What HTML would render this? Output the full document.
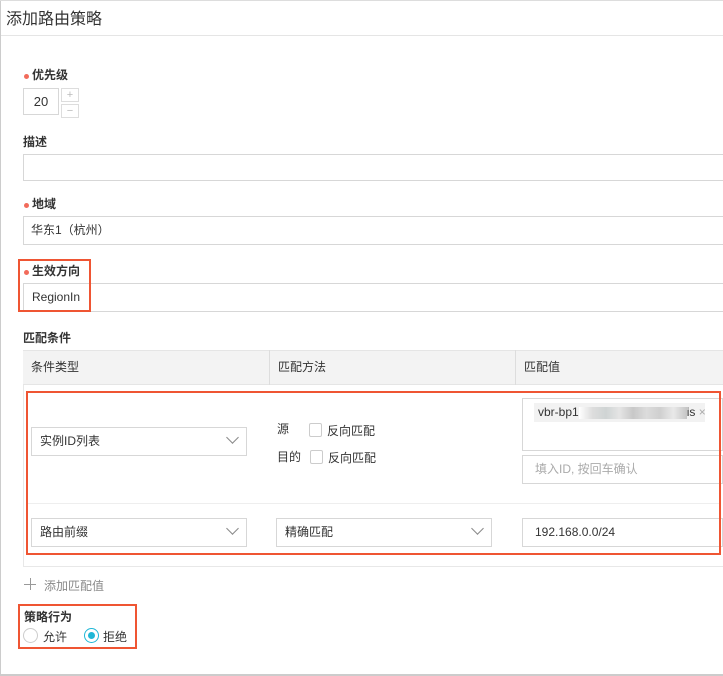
<!DOCTYPE html>
<html><head><meta charset="utf-8"><style>
*{box-sizing:border-box;margin:0;padding:0}
body{width:723px;height:676px;background:#fff;position:relative;overflow:hidden;font-family:"Liberation Sans","Noto Sans CJK SC",sans-serif;font-size:12px;color:#333}
.a{position:absolute}
.lbl{position:absolute;font-weight:bold;font-size:12px;color:#333;line-height:14px}
.dot{position:absolute;width:5px;height:5px;border-radius:50%;background:#f26b5b}
.inp{position:absolute;border:1px solid #d7d7d7;background:#fff;line-height:26px;padding-left:8px;color:#333}
.red{position:absolute;border:2px solid #ef5533}
.chev{position:absolute;width:9px;height:9px;border-right:1px solid #888;border-bottom:1px solid #888;transform:rotate(45deg)}
.cb{position:absolute;width:13px;height:14px;border:1px solid #ccc;border-radius:2px;background:#fff}
</style></head><body>
<div class="a" style="left:0;top:0;width:1px;height:676px;background:#ccc"></div>
<div class="a" style="left:0;top:674px;width:723px;height:2px;background:#ccc"></div>
<div class="a" style="left:0;top:0;width:723px;height:1px;background:#ddd"></div>
<div class="a" style="left:6px;top:5px;font-size:16px;color:#333">添加路由策略</div>
<div class="a" style="left:1px;top:35px;width:722px;height:1px;background:#e5e5e5"></div>

<div class="dot" style="left:24px;top:74px"></div><div class="lbl" style="left:32px;top:68px">优先级</div>
<div class="inp" style="left:23px;top:88px;width:36px;height:27px;text-align:center;padding:0;font-size:13px">20</div>
<div class="a" style="left:61px;top:88px;width:18px;height:14px;border:1px solid #ddd;color:#bbb;text-align:center;line-height:12px;font-size:11px">+</div>
<div class="a" style="left:61px;top:104px;width:18px;height:14px;border:1px solid #ddd;color:#bbb;text-align:center;line-height:12px;font-size:11px">−</div>

<div class="lbl" style="left:23px;top:135px">描述</div>
<div class="inp" style="left:23px;top:154px;width:710px;height:27px"></div>

<div class="dot" style="left:24px;top:203px"></div><div class="lbl" style="left:32px;top:197px">地域</div>
<div class="inp" style="left:23px;top:216px;width:710px;height:29px;padding-left:7px">华东1（杭州）</div>

<div class="dot" style="left:24px;top:270px"></div><div class="lbl" style="left:32px;top:264px">生效方向</div>
<div class="inp" style="left:23px;top:283px;width:710px;height:29px;padding-left:8px">RegionIn</div>
<div class="red" style="left:18px;top:259px;width:73px;height:53px"></div>

<div class="lbl" style="left:23px;top:331px">匹配条件</div>
<div class="a" style="left:23px;top:350px;width:700px;height:35px;background:#f3f3f3;border-top:1px solid #e5e5e5;border-bottom:1px solid #e5e5e5"></div>
<div class="a" style="left:269px;top:350px;width:1px;height:35px;background:#ddd"></div>
<div class="a" style="left:515px;top:350px;width:1px;height:35px;background:#ddd"></div>
<div class="a" style="left:31px;top:358px">条件类型</div>
<div class="a" style="left:278px;top:358px">匹配方法</div>
<div class="a" style="left:524px;top:358px">匹配值</div>
<div class="a" style="left:23px;top:385px;width:1px;height:182px;background:#e8e8e8"></div>
<div class="a" style="left:23px;top:566px;width:700px;height:1px;background:#e8e8e8"></div>
<div class="a" style="left:28px;top:503px;width:692px;height:1px;background:#eee"></div>

<div class="inp" style="left:31px;top:427px;width:216px;height:29px">实例ID列表</div><div class="chev" style="left:228px;top:433px"></div>
<div class="a" style="left:277px;top:420px">源</div>
<div class="cb" style="left:309px;top:423px"></div><div class="a" style="left:327px;top:422px">反向匹配</div>
<div class="a" style="left:277px;top:448px">目的</div>
<div class="cb" style="left:310px;top:450px"></div><div class="a" style="left:328px;top:449px">反向匹配</div>
<div class="a" style="left:522px;top:398px;width:201px;height:53px;border:1px solid #d7d7d7"></div>
<div class="a" style="left:534px;top:403px;width:171px;height:19px;background:#f2f2f2;line-height:19px;padding-left:4px;font-size:12px;white-space:nowrap">vbr-bp1<span style="display:inline-block;width:108px;height:12px;vertical-align:middle;background:linear-gradient(90deg,#fff,#ddd,#cfd4d4,#e5e5e5,#c8c8c8,#dcdcdc,#cfcfcf,#e9e9e9,#c5c5c5)"></span>is <span style="color:#aaa">×</span></div>
<div class="inp" style="left:522px;top:455px;width:201px;height:29px;color:#aaa;padding-left:12px">填入ID, 按回车确认</div>

<div class="inp" style="left:31px;top:518px;width:216px;height:29px">路由前缀</div><div class="chev" style="left:228px;top:524px"></div>
<div class="inp" style="left:276px;top:518px;width:216px;height:29px">精确匹配</div><div class="chev" style="left:473px;top:524px"></div>
<div class="inp" style="left:522px;top:518px;width:201px;height:29px;padding-left:12px">192.168.0.0/24</div>
<div class="red" style="left:26px;top:391px;width:695px;height:164px"></div>

<div class="a" style="left:24px;top:584px;width:12px;height:1px;background:#999"></div>
<div class="a" style="left:30px;top:578px;width:1px;height:12px;background:#999"></div>
<div class="a" style="left:44px;top:577px;color:#888">添加匹配值</div>

<div class="lbl" style="left:24px;top:610px">策略行为</div>
<div class="a" style="left:23px;top:628px;width:15px;height:15px;border:1px solid #ccc;border-radius:50%"></div>
<div class="a" style="left:43px;top:628px">允许</div>
<div class="a" style="left:84px;top:628px;width:15px;height:15px;border:1px solid #1fb7d6;border-radius:50%"><div class="a" style="left:3px;top:3px;width:7px;height:7px;border-radius:50%;background:#1fb7d6"></div></div>
<div class="a" style="left:103px;top:628px">拒绝</div>
<div class="red" style="left:18px;top:604px;width:119px;height:45px"></div>
</body></html>
